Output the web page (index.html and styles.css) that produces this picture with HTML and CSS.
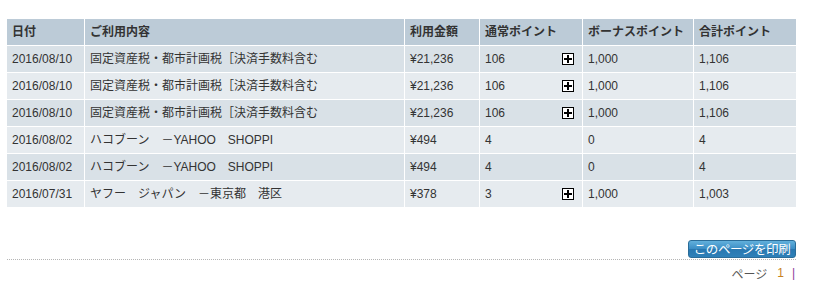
FILE: index.html
```html
<!DOCTYPE html>
<html lang="ja">
<head>
<meta charset="utf-8">
<title>ご利用明細</title>
<link rel="stylesheet" href="styles.css">
</head>
<body>
<div class="page">
  <table class="detail">
    <colgroup>
      <col class="c-date"><col class="c-desc"><col class="c-amt"><col class="c-pt"><col class="c-bonus"><col class="c-total">
    </colgroup>
    <thead>
      <tr><th>日付</th><th>ご利用内容</th><th>利用金額</th><th>通常ポイント</th><th>ボーナスポイント</th><th>合計ポイント</th></tr>
    </thead>
    <tbody>
      <tr class="odd"><td>2016/08/10</td><td>固定資産税・都市計画税［決済手数料含む</td><td>¥21,236</td><td><span class="plus"></span>106</td><td>1,000</td><td>1,106</td></tr>
      <tr class="even"><td>2016/08/10</td><td>固定資産税・都市計画税［決済手数料含む</td><td>¥21,236</td><td><span class="plus"></span>106</td><td>1,000</td><td>1,106</td></tr>
      <tr class="odd"><td>2016/08/10</td><td>固定資産税・都市計画税［決済手数料含む</td><td>¥21,236</td><td><span class="plus"></span>106</td><td>1,000</td><td>1,106</td></tr>
      <tr class="even"><td>2016/08/02</td><td>ハコブーン　－YAHOO　SHOPPI</td><td>¥494</td><td>4</td><td>0</td><td>4</td></tr>
      <tr class="odd"><td>2016/08/02</td><td>ハコブーン　－YAHOO　SHOPPI</td><td>¥494</td><td>4</td><td>0</td><td>4</td></tr>
      <tr class="even"><td>2016/07/31</td><td>ヤフー　ジャパン　－東京都　港区</td><td>¥378</td><td><span class="plus"></span>3</td><td>1,000</td><td>1,003</td></tr>
    </tbody>
  </table>
  <div class="actions">
    <button class="print-btn" type="button">このページを印刷</button>
  </div>
  <div class="pager">
    <span class="pager-label">ページ</span>
    <span class="pager-num">1</span>
    <span class="pager-sep">|</span>
  </div>
</div>
</body>
</html>
```

FILE: styles.css
```css
html, body {
  margin: 0;
  padding: 0;
  background: #ffffff;
}

body {
  font-family: "Liberation Sans", Arial, "Noto Sans CJK JP", sans-serif;
  font-size: 12px;
  color: #333333;
}

.page {
  width: 789px;
  padding: 19px 0 0 7px;
}

.detail {
  width: 789px;
  table-layout: fixed;
  border-collapse: separate;
  border-spacing: 0;
}

.c-date { width: 78px; }
.c-desc { width: 320px; }
.c-amt { width: 75px; }
.c-pt { width: 103px; }
.c-bonus { width: 111px; }
.c-total { width: 102px; }

.detail th,
.detail td {
  height: 27px;
  padding: 0 5px;
  border-right: 1px solid #ffffff;
  border-bottom: 1px solid #ffffff;
  text-align: left;
  vertical-align: middle;
  white-space: nowrap;
  overflow: hidden;
  line-height: 14px;
  box-sizing: border-box;
}

.detail th {
  background: #bccbd7;
  font-weight: bold;
  color: #333333;
}

.detail th:last-child,
.detail td:last-child {
  border-right: none;
}

.odd td { background: #d9e1e7; }
.even td { background: #e6ebef; }

.plus {
  float: right;
  position: relative;
  width: 12px;
  height: 12px;
  margin: 1px 3px 0 0;
  box-sizing: border-box;
  border: 1px solid #000000;
  background: #ffffff;
}

.plus::before,
.plus::after {
  content: "";
  position: absolute;
  background: #000000;
}

.plus::before {
  left: 1px;
  top: 4px;
  width: 8px;
  height: 2px;
}

.plus::after {
  left: 4px;
  top: 1px;
  width: 2px;
  height: 8px;
}

.actions {
  display: flex;
  justify-content: flex-end;
  padding-top: 32px;
  border-bottom: 1px dotted #b5b5b5;
  padding-bottom: 1px;
}

.print-btn {
  width: 108px;
  height: 18px;
  padding: 0;
  margin: 0;
  border: 1px solid #2a6c98;
  border-radius: 3px;
  background: linear-gradient(#62b0dc, #3a8cc4 50%, #2877b0 51%, #2f80b8);
  color: #ffffff;
  font-family: "Noto Sans CJK JP", sans-serif;
  font-size: 12.5px;
  line-height: 16px;
  letter-spacing: -0.4px;
}

.pager {
  display: flex;
  justify-content: flex-end;
  align-items: center;
  gap: 8px;
  height: 26px;
  font-family: "Noto Sans CJK JP", "Liberation Sans", sans-serif;
  font-size: 12px;
  color: #555555;
  padding-right: 1px;
}

.pager-label { margin-right: 2px; }
.pager-num { color: #c8821e; font-family: "Liberation Sans", sans-serif; }
.pager-sep { color: #8a3a9a; font-family: "Liberation Sans", sans-serif; }
```
